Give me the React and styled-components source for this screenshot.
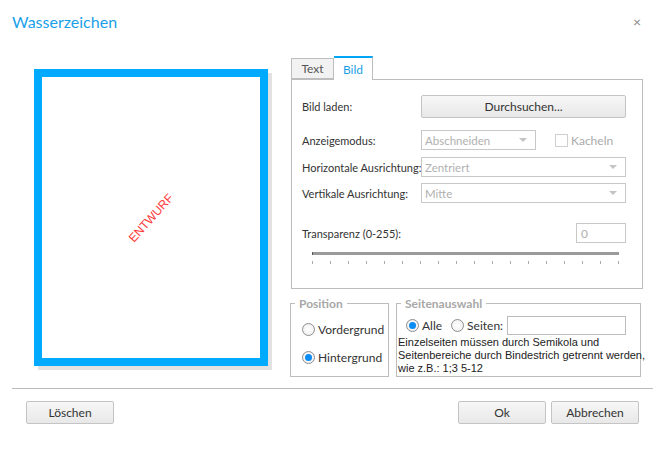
import React from 'react';
import styled, { createGlobalStyle } from 'styled-components';

const GlobalStyle = createGlobalStyle`
  body {
    margin: 0;
    background: #fff;
    font-family: Lato, "Noto Sans", sans-serif;
    font-size: 12px;
    color: #333;
  }
`;

const Dialog = styled.div`
  width: 665px;
  height: 452px;
  display: flex;
  flex-direction: column;
`;

const Header = styled.div`
  height: 56px;
  display: flex;
  justify-content: space-between;
  align-items: flex-start;
  padding: 12px 24px 0 12px;
  box-sizing: border-box;
`;

const Title = styled.h1`
  margin: 0;
  font-size: 16px;
  font-weight: 400;
  color: #1a9fe8;
`;

const Close = styled.span`
  color: #8a8a8a;
  font-size: 14px;
  line-height: 20px;
`;

const Body = styled.div`
  display: flex;
  height: 332px;
`;

const PreviewCol = styled.div`
  width: 291px;
  padding: 13px 0 0 34px;
  box-sizing: border-box;
`;

const Page = styled.div`
  width: 234px;
  height: 297px;
  box-sizing: border-box;
  border: 8px solid #00aaff;
  box-shadow: 4px 4px 0 #e2e2e2;
  display: flex;
  align-items: center;
  justify-content: center;
`;

const Watermark = styled.span`
  color: #ff3b3b;
  font-family: "Liberation Sans", sans-serif;
  font-size: 12px;
  transform: rotate(-48deg);
`;

const RightCol = styled.div`
  width: 352px;
  display: flex;
  flex-direction: column;
`;

const Tabs = styled.div`
  display: flex;
  align-items: flex-end;
  height: 23px;
`;

const Tab = styled.div`
  box-sizing: border-box;
  width: ${p => p.$w}px;
  height: ${p => (p.$active ? '24px' : '21px')};
  margin-bottom: ${p => (p.$active ? '-1px' : '0')};
  display: flex;
  align-items: center;
  justify-content: center;
  font-size: 12px;
  border: 1px solid #bdbdbd;
  border-bottom: ${p => (p.$active ? 'none' : '1px solid #bdbdbd')};
  border-top: ${p => (p.$active ? '2px solid #00a6f5' : '1px solid #bdbdbd')};
  border-left: ${p => (p.$active ? 'none' : '1px solid #bdbdbd')};
  background: ${p => (p.$active ? '#fff' : '#f2f2f2')};
  color: ${p => (p.$active ? '#1a9fe8' : '#555')};
  position: relative;
  z-index: 1;
`;

const Panel = styled.div`
  height: 210px;
  box-sizing: border-box;
  border: 1px solid #bdbdbd;
  padding: 15px 16px 0 10px;
  display: flex;
  flex-direction: column;
`;

const Row = styled.div`
  display: flex;
  align-items: center;
  margin-top: ${p => p.$gap || 0}px;
`;

const Label = styled.div`
  width: 119px;
  flex-shrink: 0;
  white-space: nowrap;
  font-size: 11px;
  color: #333;
`;

const Button = styled.button`
  box-sizing: border-box;
  width: ${p => p.$w || 88}px;
  height: 23px;
  border: 1px solid #c4c4c4;
  border-radius: 2px;
  background: linear-gradient(#f7f7f7, #e8e8e8);
  font-family: inherit;
  font-size: 12px;
  color: #333;
  padding: 0;
`;

const Select = styled.div`
  box-sizing: border-box;
  width: ${p => p.$w || 205}px;
  height: 20px;
  border: 1px solid #c8c8c8;
  display: flex;
  align-items: center;
  justify-content: space-between;
  padding: 0 8px 0 3px;
  font-size: 11.5px;
  color: #b0b0b0;
  &::after {
    content: '';
    border-left: 4px solid transparent;
    border-right: 4px solid transparent;
    border-top: 4px solid #c4c4c4;
  }
`;

const CheckLabel = styled.label`
  display: flex;
  align-items: center;
  margin-left: 19px;
  color: #aaa;
  gap: 3px;
`;

const Box = styled.span`
  width: 13px;
  height: 13px;
  box-sizing: border-box;
  border: 1px solid #cfcfcf;
  background: #fff;
`;

const Spacer = styled.div`
  flex: 1;
`;

const NumInput = styled.div`
  box-sizing: border-box;
  width: 50px;
  height: 20px;
  border: 1px solid #c8c8c8;
  padding: 0 4px;
  display: flex;
  align-items: center;
  color: #b0b0b0;
`;

const Slider = styled.div`
  margin: 9px 7px 0 10px;
`;

const Track = styled.div`
  height: 3px;
  background: #9a9a9a;
  border-left: 1px solid #555;
`;

const Ticks = styled.div`
  display: flex;
  justify-content: space-between;
  margin-top: 6px;
`;

const Tick = styled.span`
  width: 1px;
  height: 3px;
  background: #aaa;
`;

const Groups = styled.div`
  display: flex;
  gap: 7px;
  margin: 7px 0 0 -1px;
`;

const Group = styled.fieldset`
  box-sizing: border-box;
  margin: 0;
  min-width: 0;
  width: ${p => p.$w}px;
  height: 81px;
  border: 1px solid #bdbdbd;
  padding: 0;
  display: flex;
  flex-direction: column;
`;

const Legend = styled.legend`
  margin-left: 4px;
  padding: 0 4px;
  font-weight: 700;
  font-size: 12px;
  color: #a8a8a8;
`;

const RadioLabel = styled.label`
  display: flex;
  align-items: center;
  gap: 3px;
  font-size: 12px;
  color: #333;
`;

const Radio = styled.span`
  width: 13px;
  height: 13px;
  box-sizing: border-box;
  border-radius: 50%;
  border: 1px solid #8d8d8d;
  background: radial-gradient(#fff, #ececec);
  display: flex;
  align-items: center;
  justify-content: center;
  &::after {
    content: '';
    display: ${p => (p.$checked ? 'block' : 'none')};
    width: 7px;
    height: 7px;
    border-radius: 50%;
    background: #0c8bf2;
  }
`;

const PosRadios = styled.div`
  display: flex;
  flex-direction: column;
  gap: 13px;
  padding: 11px 0 0 11px;
`;

const PageRow = styled.div`
  display: flex;
  align-items: center;
  gap: 9px;
  padding: 5px 0 0 9px;
`;

const TextInput = styled.div`
  width: 119px;
  height: 19px;
  box-sizing: border-box;
  border: 1px solid #bdbdbd;
  margin-left: -5px;
`;

const Hint = styled.p`
  margin: 1px 0 0 1px;
  font-family: "Liberation Sans", sans-serif;
  font-size: 11px;
  line-height: 13px;
  color: #222;
  white-space: nowrap;
`;

const Footer = styled.div`
  margin: 0 12px;
  border-top: 1px solid #bcbcbc;
  padding: 12px 14px 0 14px;
  display: flex;
  gap: 5px;
`;

export default function App() {
  const ticks = Array.from({ length: 18 });
  return (
    <Dialog>
      <GlobalStyle />
      <Header>
        <Title>Wasserzeichen</Title>
        <Close>×</Close>
      </Header>
      <Body>
        <PreviewCol>
          <Page>
            <Watermark>ENTWURF</Watermark>
          </Page>
        </PreviewCol>
        <RightCol>
          <Tabs>
            <Tab $w={43}>Text</Tab>
            <Tab $w={39} $active>Bild</Tab>
          </Tabs>
          <Panel>
            <Row>
              <Label>Bild laden:</Label>
              <Button $w={205}>Durchsuchen...</Button>
            </Row>
            <Row $gap={12}>
              <Label>Anzeigemodus:</Label>
              <Select $w={115}>Abschneiden</Select>
              <CheckLabel>
                <Box />
                Kacheln
              </CheckLabel>
            </Row>
            <Row $gap={7}>
              <Label>Horizontale Ausrichtung:</Label>
              <Select>Zentriert</Select>
            </Row>
            <Row $gap={6}>
              <Label>Vertikale Ausrichtung:</Label>
              <Select>Mitte</Select>
            </Row>
            <Row $gap={20}>
              <Label>Transparenz (0-255):</Label>
              <Spacer />
              <NumInput>0</NumInput>
            </Row>
            <Slider>
              <Track />
              <Ticks>
                {ticks.map((_, i) => (
                  <Tick key={i} />
                ))}
              </Ticks>
            </Slider>
          </Panel>
          <Groups>
            <Group $w={99}>
              <Legend>Position</Legend>
              <PosRadios>
                <RadioLabel>
                  <Radio />
                  Vordergrund
                </RadioLabel>
                <RadioLabel>
                  <Radio $checked />
                  Hintergrund
                </RadioLabel>
              </PosRadios>
            </Group>
            <Group $w={245}>
              <Legend>Seitenauswahl</Legend>
              <PageRow>
                <RadioLabel>
                  <Radio $checked />
                  Alle
                </RadioLabel>
                <RadioLabel>
                  <Radio />
                  Seiten:
                </RadioLabel>
                <TextInput />
              </PageRow>
              <Hint>
                Einzelseiten müssen durch Semikola und
                <br />
                Seitenbereiche durch Bindestrich getrennt werden,
                <br />
                wie z.B.: 1;3 5-12
              </Hint>
            </Group>
          </Groups>
        </RightCol>
      </Body>
      <Footer>
        <Button>Löschen</Button>
        <Spacer />
        <Button>Ok</Button>
        <Button>Abbrechen</Button>
      </Footer>
    </Dialog>
  );
}
